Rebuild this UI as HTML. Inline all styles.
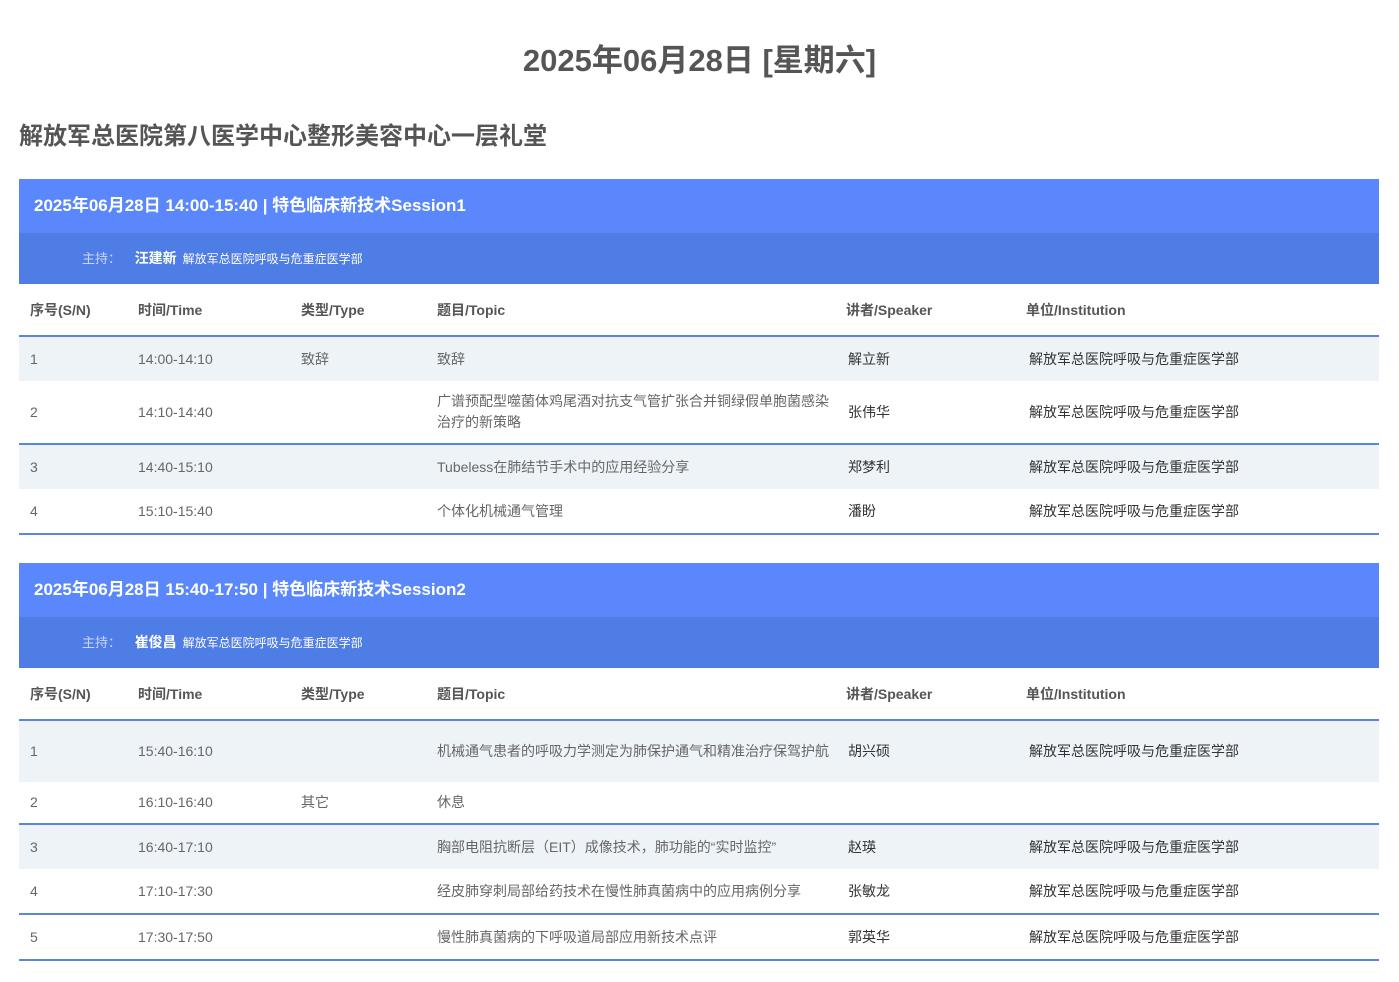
<!DOCTYPE html>
<html><head><meta charset="utf-8"><style>
body{margin:0;background:#fff;font-family:"Liberation Sans","Noto Sans CJK SC",sans-serif;color:#555;width:1399px;height:982px;overflow:hidden}
h1{position:absolute;top:41px;left:0;width:1399px;text-align:center;margin:0;font-size:31px;font-weight:bold;color:#555;line-height:40px}
h2{position:absolute;left:19px;margin:0;font-size:24px;font-weight:bold;color:#555;line-height:30px}
.blk{position:absolute;left:19px;width:1360px}
.t{background:#5a88fc;height:54px;line-height:54px;color:#fff;font-weight:bold;font-size:17px;padding-left:15px}
.h{background:#4f7de6;height:51px;line-height:51px;font-size:13px;color:#c8d6f8;padding-left:63px}
.h b{color:#fff;font-size:14px;margin:0 6px 0 10px}
.h span{color:#fff;font-size:12px}
table{border-collapse:collapse;width:1360px;font-size:14px;table-layout:fixed}
th{text-align:left;font-weight:bold;color:#555;height:51px;border-bottom:2px solid #5b86dd;padding:0 0 0 11px;font-size:14px}
td{padding:0 0 0 11px;color:#666;vertical-align:middle;line-height:21px}
tr.g td{background:#eef3f8}
tr.l td{border-bottom:2px solid #5b86dd}
td.s{color:#333;padding-left:13px}
td.i{color:#333;padding-left:14px}
</style></head><body>
<h1>2025年06月28日 [星期六]</h1>
<h2 style="top:122px">解放军总医院第八医学中心整形美容中心一层礼堂</h2>
<div class="blk" style="top:179px">
<div class="t">2025年06月28日 14:00-15:40 | 特色临床新技术Session1</div>
<div class="h">主持： <b>汪建新</b><span>解放军总医院呼吸与危重症医学部</span></div>
<table><colgroup><col style="width:108px"><col style="width:163px"><col style="width:136px"><col style="width:409px"><col style="width:180px"><col></colgroup>
<tr><th>序号(S/N)</th><th>时间/Time</th><th>类型/Type</th><th>题目/Topic</th><th>讲者/Speaker</th><th>单位/Institution</th></tr>
<tr class="g" style="height:45px"><td>1</td><td>14:00-14:10</td><td>致辞</td><td>致辞</td><td class="s">解立新</td><td class="i">解放军总医院呼吸与危重症医学部</td></tr>
<tr class="l" style="height:63px"><td>2</td><td>14:10-14:40</td><td></td><td>广谱预配型噬菌体鸡尾酒对抗支气管扩张合并铜绿假单胞菌感染治疗的新策略</td><td class="s">张伟华</td><td class="i">解放军总医院呼吸与危重症医学部</td></tr>
<tr class="g" style="height:45px"><td>3</td><td>14:40-15:10</td><td></td><td>Tubeless在肺结节手术中的应用经验分享</td><td class="s">郑梦利</td><td class="i">解放军总医院呼吸与危重症医学部</td></tr>
<tr class="l" style="height:45px"><td>4</td><td>15:10-15:40</td><td></td><td>个体化机械通气管理</td><td class="s">潘盼</td><td class="i">解放军总医院呼吸与危重症医学部</td></tr>
</table></div>
<div class="blk" style="top:563px">
<div class="t">2025年06月28日 15:40-17:50 | 特色临床新技术Session2</div>
<div class="h">主持： <b>崔俊昌</b><span>解放军总医院呼吸与危重症医学部</span></div>
<table><colgroup><col style="width:108px"><col style="width:163px"><col style="width:136px"><col style="width:409px"><col style="width:180px"><col></colgroup>
<tr><th>序号(S/N)</th><th>时间/Time</th><th>类型/Type</th><th>题目/Topic</th><th>讲者/Speaker</th><th>单位/Institution</th></tr>
<tr class="g" style="height:62px"><td>1</td><td>15:40-16:10</td><td></td><td>机械通气患者的呼吸力学测定为肺保护通气和精准治疗保驾护航</td><td class="s">胡兴硕</td><td class="i">解放军总医院呼吸与危重症医学部</td></tr>
<tr class="l" style="height:42px"><td>2</td><td>16:10-16:40</td><td>其它</td><td>休息</td><td class="s"></td><td class="i"></td></tr>
<tr class="g" style="height:45px"><td>3</td><td>16:40-17:10</td><td></td><td>胸部电阻抗断层（EIT）成像技术，肺功能的“实时监控”</td><td class="s">赵瑛</td><td class="i">解放军总医院呼吸与危重症医学部</td></tr>
<tr class="l" style="height:45px"><td>4</td><td>17:10-17:30</td><td></td><td>经皮肺穿刺局部给药技术在慢性肺真菌病中的应用病例分享</td><td class="s">张敏龙</td><td class="i">解放军总医院呼吸与危重症医学部</td></tr>
<tr class="l" style="height:46px"><td>5</td><td>17:30-17:50</td><td></td><td>慢性肺真菌病的下呼吸道局部应用新技术点评</td><td class="s">郭英华</td><td class="i">解放军总医院呼吸与危重症医学部</td></tr>
</table></div>
</body></html>
